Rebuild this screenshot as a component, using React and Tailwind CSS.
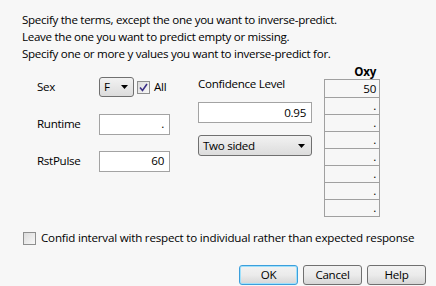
const font = { fontFamily: '"Open Sans", "Noto Sans", sans-serif' };

function Caret() {
  return (
    <svg width="7" height="4" viewBox="0 0 7 4" className="shrink-0">
      <path d="M0 0h7L3.5 4z" fill="#000" />
    </svg>
  );
}

function Field({ value, className = "" }) {
  return (
    <div
      className={`h-[21px] border border-[#a3a3a3] bg-white flex items-center justify-end pr-[5px] text-black ${className}`}
    >
      {value}
    </div>
  );
}

function Btn({ label, primary }) {
  return (
    <button
      className={`w-[59px] h-[20px] rounded-[3px] border ${
        primary ? "border-[#3c9fdc] shadow-[inset_0_0_0_1px_#9fe0fb]" : "border-[#707070]"
      } bg-gradient-to-b from-[#f2f2f2] via-[#ebebeb] to-[#d6d6d6] text-black leading-none tracking-[-0.3px]`}
    >
      {label}
    </button>
  );
}

export default function App() {
  const oxy = ["50", ".", ".", ".", ".", ".", ".", "."];

  return (
    <div
      className="w-[436px] h-[286px] bg-[#f7f7f7] text-black text-[11.6px] tracking-[-0.3px] overflow-hidden"
      style={font}
    >
      <div className="pl-[22px] pt-[11px] leading-[17px]">
        <p>Specify the terms, except the one you want to inverse-predict.</p>
        <p>Leave the one you want to predict empty or missing.</p>
        <p>Specify one or more y values you want to inverse-predict for.</p>
      </div>

      <div className="flex items-start h-[158px]">
        {/* left column */}
        <div className="ml-[37px] mt-[15px] flex flex-col gap-[17px]">
          <div className="flex items-center h-[20px]">
            <span className="w-[62px]">Sex</span>
            <div className="w-[35px] h-[20px] rounded-[3px] border border-[#707070] bg-gradient-to-b from-[#f2f2f2] to-[#dcdcdc] flex items-center justify-between pl-[4px] pr-[5px]">
              <span>F</span>
              <Caret />
            </div>
            <div className="ml-[3px] w-[13px] h-[13px] border border-[#8e8f8f] bg-gradient-to-br from-[#dcdcdc] to-[#f8f8f8] flex items-center justify-center">
              <svg width="9" height="9" viewBox="0 0 9 9">
                <path d="M1 4.5l2.5 3L8 1" stroke="#3b2f86" strokeWidth="1.6" fill="none" />
              </svg>
            </div>
            <span className="ml-[4px]">All</span>
          </div>
          <div className="flex items-center h-[20px]">
            <span className="w-[62px]">Runtime</span>
            <Field value="." className="w-[71px] h-[20px]" />
          </div>
          <div className="flex items-center h-[20px]">
            <span className="w-[62px]">RstPulse</span>
            <Field value="60" className="w-[71px] h-[20px]" />
          </div>
        </div>

        {/* middle column */}
        <div className="ml-[28px] mt-[13px] flex flex-col w-[114px]">
          <span className="leading-[17px]">Confidence Level</span>
          <Field value="0.95" className="mt-[10px] w-[114px]" />
          <div className="mt-[12px] w-[114px] h-[21px] rounded-[3px] border border-[#707070] bg-gradient-to-b from-[#f2f2f2] to-[#dcdcdc] flex items-center justify-between pl-[4px] pr-[6px]">
            <span>Two sided</span>
            <Caret />
          </div>
        </div>

        {/* oxy column */}
        <div className="ml-[12px] mt-[2px] flex flex-col w-[56px]">
          <span className="font-bold text-right pr-[4px] leading-[15px]">Oxy</span>
          <div className="border border-[#a0a0a0] flex flex-col">
            {oxy.map((v, i) => (
              <div
                key={i}
                className={`h-[17px] flex items-center justify-end pr-[3px] bg-[#f7f7f7] ${
                  i > 0 ? "border-t border-[#a0a0a0]" : ""
                }`}
              >
                {v}
              </div>
            ))}
          </div>
        </div>
      </div>

      <div className="flex items-center pl-[23px] mt-[11px] h-[14px] whitespace-nowrap">
        <div className="w-[13px] h-[13px] border border-[#8e8f8f] bg-gradient-to-br from-[#dcdcdc] to-[#f8f8f8]" />
        <span className="ml-[5px] tracking-[-0.2px]">
          Confid interval with respect to individual rather than expected response
        </span>
      </div>

      <div className="flex justify-end gap-[5px] pr-[10px] mt-[20px]">
        <Btn label="OK" primary />
        <Btn label="Cancel" />
        <Btn label="Help" />
      </div>
    </div>
  );
}
